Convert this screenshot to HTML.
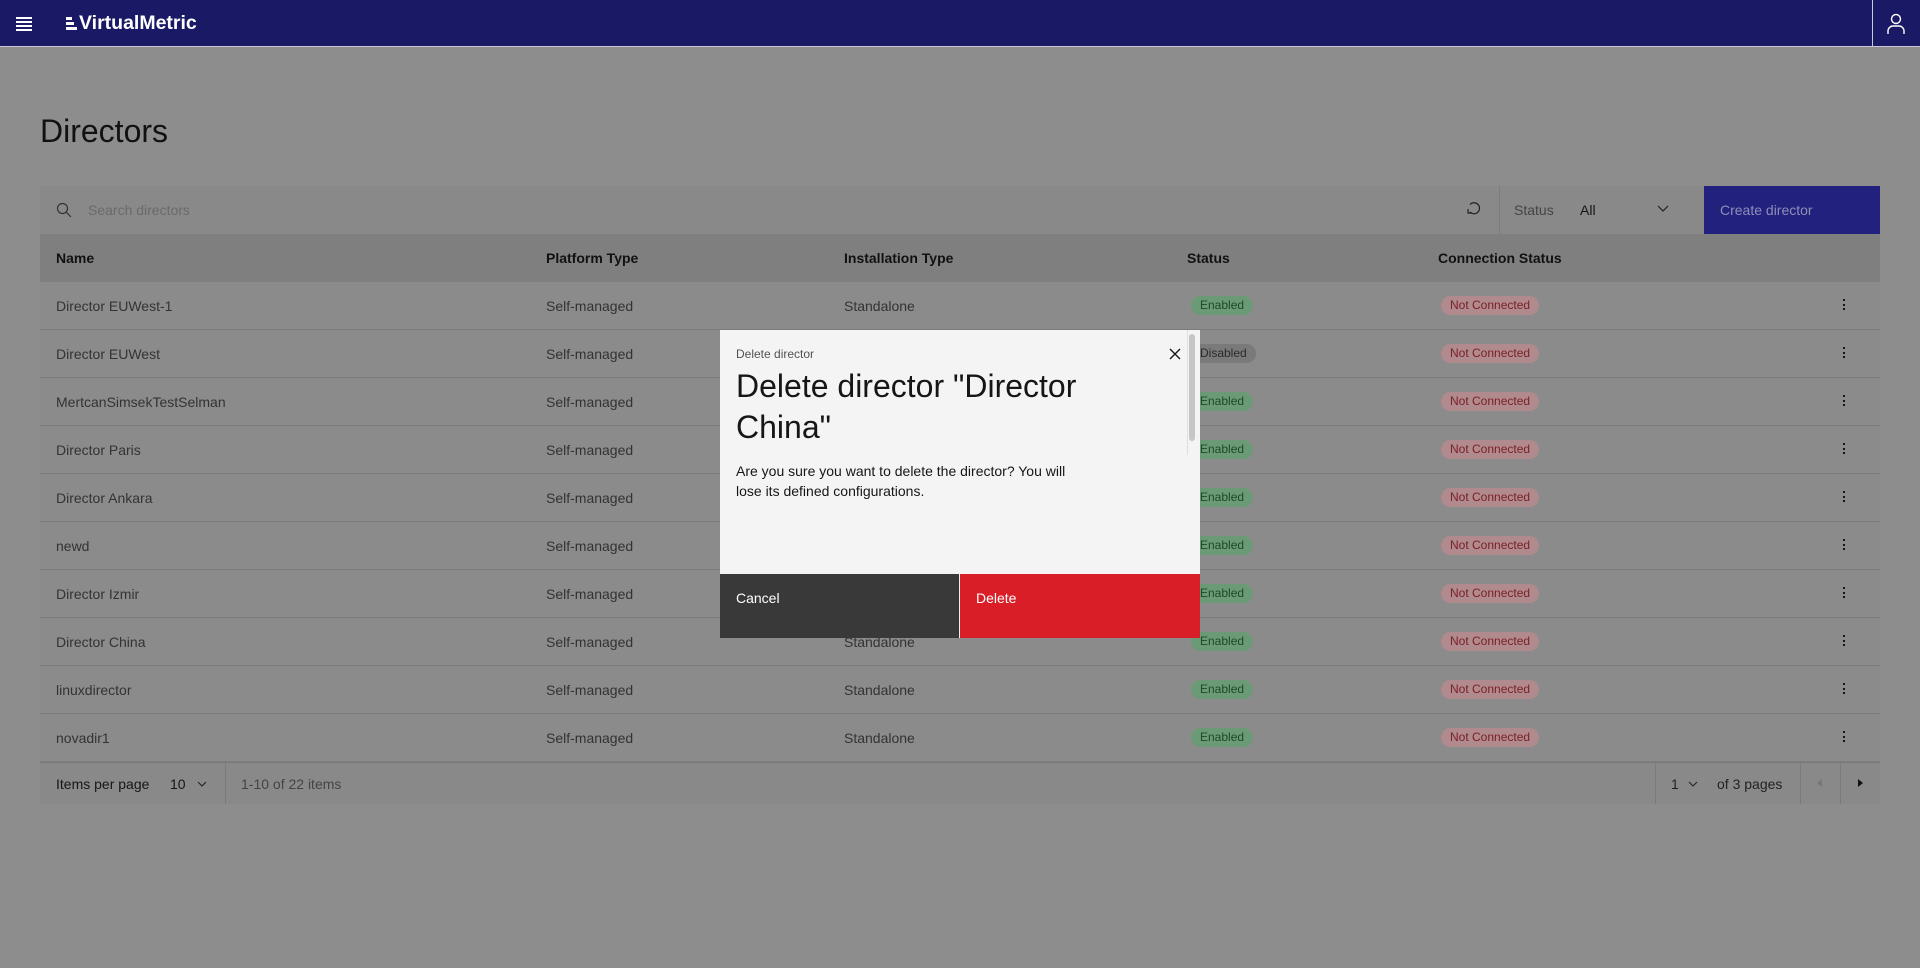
<!DOCTYPE html>
<html><head><meta charset="utf-8"><style>
*{box-sizing:border-box;margin:0;padding:0}
body{width:1920px;height:968px;background:#8d8d8d;font-family:"Liberation Sans",sans-serif;position:relative;overflow:hidden;color:#161616}
.hdr{position:absolute;left:0;top:0;width:1920px;height:47px;background:#191966;border-bottom:1px solid #c8c8d8}
.abs{position:absolute}
.t{position:absolute;white-space:nowrap}
.row{position:absolute;left:40px;width:1840px;height:48px;background:#8b8b8b;border-bottom:1px solid #7c7c7c;font-size:14px;color:#333}
.row .t{top:16px}
.tag{position:absolute;top:14px;height:19px;border-radius:10px;font-size:12px;line-height:19px;padding:0 9px}
.en{background:#6b9a76;color:#1c4a29}
.dis{background:#7a7a7a;color:#2a2a2a}
.nc{background:#b08a8c;color:#7a1f27}
.dots{position:absolute;left:1803px;top:17px;width:3px}
.dots i{display:block;width:2px;height:2px;background:#161616;margin-bottom:2.5px}
</style></head><body>
<div class="hdr">
  <div class="abs" style="left:16px;top:17px;width:16px">
    <div style="height:1.5px;background:#fff;margin-bottom:2.5px"></div><div style="height:1.5px;background:#fff;margin-bottom:2.5px"></div><div style="height:1.5px;background:#fff;margin-bottom:2.5px"></div><div style="height:1.5px;background:#fff"></div>
  </div>
  <div class="abs" style="left:66px;top:17px;width:10px">
    <div style="height:2.5px;width:6px;background:#fff;margin-bottom:2.5px"></div><div style="height:2.5px;width:8px;background:#fff;margin-bottom:2.5px"></div><div style="height:2.5px;width:11px;background:#fff"></div>
  </div>
  <div class="t" style="left:79px;top:12px;color:#fff;font-weight:bold;font-size:19.5px;letter-spacing:0">VirtualMetric</div>
  <div class="abs" style="left:1872px;top:0;width:1px;height:47px;background:#c8c8d8"></div>
  <svg class="abs" style="left:1886px;top:13px" width="20" height="22" viewBox="0 0 20 22" fill="none" stroke="#fff" stroke-width="1.4"><circle cx="10" cy="6" r="4.5"/><path d="M2 21v-3a5 5 0 0 1 5-5h6a5 5 0 0 1 5 5v3"/></svg>
</div>

<div class="t" style="left:40px;top:113px;font-size:32px;color:#111">Directors</div>

<div class="abs" style="left:40px;top:186px;width:1840px;height:48px;background:#898989"></div>
<svg class="abs" style="left:56px;top:202px" width="16" height="16" viewBox="0 0 16 16" fill="none" stroke="#333" stroke-width="1.2"><circle cx="6.5" cy="6.5" r="5"/><path d="M10.2 10.2L15 15"/></svg>
<div class="t" style="left:88px;top:202px;font-size:14px;color:#6a6a6a">Search directors</div>
<svg class="abs" style="left:1466px;top:201px" width="16" height="16" viewBox="0 0 16 16" fill="none" stroke="#222" stroke-width="1.2"><path d="M4 11a5.5 5.5 0 1 0 0-7.5"/><path d="M2 8v4h4"/></svg>
<div class="abs" style="left:1499px;top:186px;width:1px;height:48px;background:#7c7c7c"></div>
<div class="t" style="left:1514px;top:202px;font-size:14px;color:#444">Status</div>
<div class="t" style="left:1580px;top:202px;font-size:14px;color:#161616">All</div>
<svg class="abs" style="left:1657px;top:205px" width="12" height="8" viewBox="0 0 12 8" fill="none" stroke="#222" stroke-width="1.2"><path d="M1 1l5 5 5-5"/></svg>
<div class="abs" style="left:1704px;top:186px;width:176px;height:48px;background:#22227e"></div>
<div class="t" style="left:1720px;top:202px;font-size:14px;color:#8d8db8">Create director</div>

<div class="abs" style="left:40px;top:234px;width:1840px;height:48px;background:#7f7f7f;font-size:14px;font-weight:bold;color:#111">
  <div class="t" style="left:16px;top:16px">Name</div>
  <div class="t" style="left:506px;top:16px">Platform Type</div>
  <div class="t" style="left:804px;top:16px">Installation Type</div>
  <div class="t" style="left:1147px;top:16px">Status</div>
  <div class="t" style="left:1398px;top:16px">Connection Status</div>
</div>

<div class="row" style="top:282px"><div class="t" style="left:16px">Director EUWest-1</div><div class="t" style="left:506px">Self-managed</div><div class="t" style="left:804px">Standalone</div><span class="tag en" style="left:1151px">Enabled</span><span class="tag nc" style="left:1401px">Not Connected</span><div class="dots"><i></i><i></i><i></i></div></div>
<div class="row" style="top:330px"><div class="t" style="left:16px">Director EUWest</div><div class="t" style="left:506px">Self-managed</div><span class="tag dis" style="left:1151px">Disabled</span><span class="tag nc" style="left:1401px">Not Connected</span><div class="dots"><i></i><i></i><i></i></div></div>
<div class="row" style="top:378px"><div class="t" style="left:16px">MertcanSimsekTestSelman</div><div class="t" style="left:506px">Self-managed</div><span class="tag en" style="left:1151px">Enabled</span><span class="tag nc" style="left:1401px">Not Connected</span><div class="dots"><i></i><i></i><i></i></div></div>
<div class="row" style="top:426px"><div class="t" style="left:16px">Director Paris</div><div class="t" style="left:506px">Self-managed</div><span class="tag en" style="left:1151px">Enabled</span><span class="tag nc" style="left:1401px">Not Connected</span><div class="dots"><i></i><i></i><i></i></div></div>
<div class="row" style="top:474px"><div class="t" style="left:16px">Director Ankara</div><div class="t" style="left:506px">Self-managed</div><span class="tag en" style="left:1151px">Enabled</span><span class="tag nc" style="left:1401px">Not Connected</span><div class="dots"><i></i><i></i><i></i></div></div>
<div class="row" style="top:522px"><div class="t" style="left:16px">newd</div><div class="t" style="left:506px">Self-managed</div><span class="tag en" style="left:1151px">Enabled</span><span class="tag nc" style="left:1401px">Not Connected</span><div class="dots"><i></i><i></i><i></i></div></div>
<div class="row" style="top:570px"><div class="t" style="left:16px">Director Izmir</div><div class="t" style="left:506px">Self-managed</div><span class="tag en" style="left:1151px">Enabled</span><span class="tag nc" style="left:1401px">Not Connected</span><div class="dots"><i></i><i></i><i></i></div></div>
<div class="row" style="top:618px"><div class="t" style="left:16px">Director China</div><div class="t" style="left:506px">Self-managed</div><div class="t" style="left:804px">Standalone</div><span class="tag en" style="left:1151px">Enabled</span><span class="tag nc" style="left:1401px">Not Connected</span><div class="dots"><i></i><i></i><i></i></div></div>
<div class="row" style="top:666px"><div class="t" style="left:16px">linuxdirector</div><div class="t" style="left:506px">Self-managed</div><div class="t" style="left:804px">Standalone</div><span class="tag en" style="left:1151px">Enabled</span><span class="tag nc" style="left:1401px">Not Connected</span><div class="dots"><i></i><i></i><i></i></div></div>
<div class="row" style="top:714px"><div class="t" style="left:16px">novadir1</div><div class="t" style="left:506px">Self-managed</div><div class="t" style="left:804px">Standalone</div><span class="tag en" style="left:1151px">Enabled</span><span class="tag nc" style="left:1401px">Not Connected</span><div class="dots"><i></i><i></i><i></i></div></div>

<div class="abs" style="left:40px;top:762px;width:1840px;height:42px;background:#898989;border-top:1px solid #7a7a7a;font-size:14px">
  <div class="t" style="left:16px;top:13px;color:#161616">Items per page</div>
  <div class="t" style="left:130px;top:13px;color:#161616">10</div>
  <svg class="abs" style="left:157px;top:18px" width="10" height="6" viewBox="0 0 10 6" fill="none" stroke="#222" stroke-width="1.1"><path d="M1 1l4 4 4-4"/></svg>
  <div class="abs" style="left:185px;top:0;width:1px;height:41px;background:#7a7a7a"></div>
  <div class="t" style="left:201px;top:13px;color:#444">1-10 of 22 items</div>
  <div class="abs" style="left:1615px;top:0;width:1px;height:41px;background:#7a7a7a"></div>
  <div class="t" style="left:1631px;top:13px;color:#222">1</div>
  <svg class="abs" style="left:1648px;top:18px" width="10" height="6" viewBox="0 0 10 6" fill="none" stroke="#222" stroke-width="1.1"><path d="M1 1l4 4 4-4"/></svg>
  <div class="t" style="left:1677px;top:13px;color:#222">of 3 pages</div>
  <div class="abs" style="left:1760px;top:0;width:1px;height:41px;background:#7a7a7a"></div>
  <svg class="abs" style="left:1777px;top:16px" width="6" height="8" viewBox="0 0 6 8"><path d="M5 0L0 4l5 4z" fill="#777"/></svg>
  <div class="abs" style="left:1800px;top:0;width:1px;height:41px;background:#7a7a7a"></div>
  <svg class="abs" style="left:1818px;top:16px" width="6" height="8" viewBox="0 0 6 8"><path d="M0 0l5 4-5 4z" fill="#111"/></svg>
</div>

<div class="abs" style="left:720px;top:330px;width:480px;height:308px;background:#f4f4f4">
  <div class="t" style="left:16px;top:17px;font-size:12px;color:#525252">Delete director</div>
  <svg class="abs" style="left:449px;top:18px" width="12" height="12" viewBox="0 0 12 12" stroke="#161616" stroke-width="1.4"><path d="M1 1l10 10M11 1L1 11"/></svg>
  <div class="abs" style="left:16px;top:36px;font-size:32px;line-height:41px;color:#161616;width:400px">Delete director "Director China"</div>
  <div class="abs" style="left:16px;top:131px;font-size:14px;line-height:20px;color:#161616;width:340px">Are you sure you want to delete the director? You will lose its defined configurations.</div>
  <div class="abs" style="left:467px;top:0;width:1px;height:125px;background:#e0e0e0"></div>
  <div class="abs" style="left:469px;top:4px;width:6px;height:107px;border-radius:3px;background:#c6c6c6"></div>
  <div class="abs" style="left:0;top:244px;width:239px;height:64px;background:#393939"></div>
  <div class="abs" style="left:240px;top:244px;width:240px;height:64px;background:#da1e28"></div>
  <div class="t" style="left:16px;top:260px;font-size:14px;color:#fff">Cancel</div>
  <div class="t" style="left:256px;top:260px;font-size:14px;color:#fff">Delete</div>
</div>
</body></html>
